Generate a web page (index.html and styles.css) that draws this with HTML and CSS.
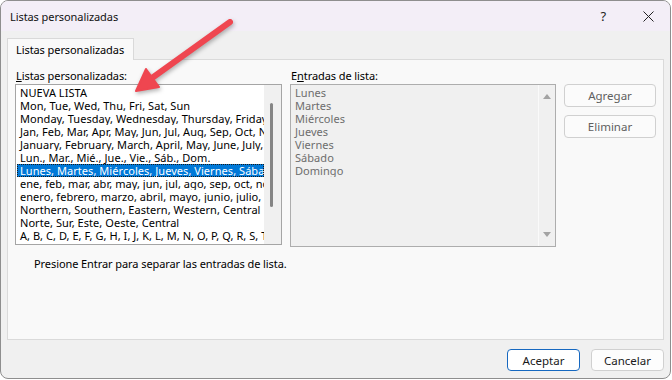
FILE: index.html
```html
<!DOCTYPE html>
<html lang="es">
<head>
    <meta charset="UTF-8">
    <title>Listas personalizadas</title>
    <link rel="stylesheet" href="styles.css">
</head>
<body>
    <div class="window">
        <div class="titlebar">
            <span class="title">Listas personalizadas</span>
            <div class="title-actions">
                <span class="help">?</span>
                <svg class="close" width="11" height="11" viewBox="0 0 11 11">
                    <path d="M0.5 0.5 L10.5 10.5 M10.5 0.5 L0.5 10.5" stroke="#222" stroke-width="1" fill="none"/>
                </svg>
            </div>
        </div>

        <div class="dialog-body">
            <div class="tabs">
                <div class="tab">Listas personalizadas</div>
            </div>

            <div class="panel">
                <div class="columns">
                    <div class="col col-lists">
                        <label class="field-label"><u>L</u>istas personalizadas:</label>
                        <div class="listbox">
                            <ul class="items">
                                <li>NUEVA LISTA</li>
                                <li>Mon, Tue, Wed, Thu, Fri, Sat, Sun</li>
                                <li>Monday, Tuesday, Wednesday, Thursday, Friday, Saturday, Sunday</li>
                                <li>Jan, Feb, Mar, Apr, May, Jun, Jul, Aug, Sep, Oct, Nov, Dec</li>
                                <li>January, February, March, April, May, June, July, August</li>
                                <li>Lun., Mar., Mié., Jue., Vie., Sáb., Dom.</li>
                                <li class="selected">Lunes, Martes, Miércoles, Jueves, Viernes, Sábado, Domingo</li>
                                <li>ene, feb, mar, abr, may, jun, jul, ago, sep, oct, nov, dic</li>
                                <li>enero, febrero, marzo, abril, mayo, junio, julio, agosto</li>
                                <li>Northern, Southern, Eastern, Western, Central</li>
                                <li>Norte, Sur, Este, Oeste, Central</li>
                                <li>A, B, C, D, E, F, G, H, I, J, K, L, M, N, O, P, Q, R, S, T</li>
                            </ul>
                            <div class="scrollbar">
                                <div class="thumb"></div>
                            </div>
                        </div>
                    </div>

                    <div class="col col-entries">
                        <label class="field-label">E<u>n</u>tradas de lista:</label>
                        <div class="listbox disabled">
                            <ul class="items">
                                <li>Lunes</li>
                                <li>Martes</li>
                                <li>Miércoles</li>
                                <li>Jueves</li>
                                <li>Viernes</li>
                                <li>Sábado</li>
                                <li>Domingo</li>
                            </ul>
                            <div class="scrollbar arrows">
                                <span class="arrow-up"></span>
                                <span class="arrow-down"></span>
                            </div>
                        </div>
                    </div>

                    <div class="side-buttons">
                        <button class="btn side">Agregar</button>
                        <button class="btn side">Eliminar</button>
                    </div>
                </div>

                <p class="hint">Presione Entrar para separar las entradas de lista.</p>
            </div>

            <div class="footer">
                <button class="btn primary">Aceptar</button>
                <button class="btn">Cancelar</button>
            </div>
        </div>

        <!-- flecha de anotación -->
        <svg class="annotation" width="671" height="379" viewBox="0 0 671 379">
            <line x1="230" y1="22" x2="152" y2="78" stroke="#ef4650" stroke-width="6" stroke-linecap="round"/>
            <polygon points="136,91 146,69 159,87" fill="#ef4650" stroke="#ef4650" stroke-width="2" stroke-linejoin="round"/>
        </svg>
    </div>
</body>
</html>
```

FILE: styles.css
```css
* {
    margin: 0;
    padding: 0;
    box-sizing: border-box;
}

body {
    background-color: #ffffff;
    font-family: "Noto Sans", "Open Sans", sans-serif;
    font-size: 11px;
    letter-spacing: -0.08px;
    color: #000;
}

.window {
    position: relative;
    width: 671px;
    height: 379px;
    border: 1px solid #8e8e8e;
    border-radius: 8px;
    overflow: hidden;
    background-color: #f0f0f0;
}

/* barra de título */
.titlebar {
    height: 30px;
    display: flex;
    align-items: center;
    justify-content: space-between;
    padding: 0 16px 0 9px;
    background-color: #f3eef7;
}

.title {
    font-size: 11px;
    color: #111;
}

.title-actions {
    display: flex;
    align-items: center;
    gap: 37px;
}

.help {
    font-size: 13px;
    color: #222;
}

.close {
    display: block;
}

.dialog-body {
    padding: 7px 6px 0 6px;
}

.tabs {
    display: flex;
    height: 21px;
}

.tab {
    position: relative;
    z-index: 1;
    width: 127px;
    height: 22px;
    padding-left: 8px;
    line-height: 21px;
    white-space: nowrap;
    background-color: #f9f9f9;
    border: 1px solid #d9d9d9;
    border-bottom: none;
}

.panel {
    height: 281px;
    padding: 8px 7px 0 7px;
    background-color: #f9f9f9;
    border: 1px solid #dadada;
}

.columns {
    display: flex;
    gap: 8px;
}

.col-lists {
    width: 267px;
}

.col-entries {
    width: 266px;
}

.field-label {
    display: block;
    height: 16px;
    line-height: 15px;
    padding-left: 1px;
    white-space: nowrap;
}

.listbox {
    display: flex;
    height: 161px;
    background-color: #fff;
    border: 1px solid #a5a5a5;
    overflow: hidden;
}

.listbox.disabled {
    height: 163px;
    background-color: #f0f0f0;
    border-color: #adadad;
    color: #6d6d6d;
}

.items {
    flex: 1;
    min-width: 0;
    list-style: none;
    padding: 1px 0 0 1px;
    overflow: hidden;
    letter-spacing: 0.05px;
}

.items li {
    height: 13px;
    line-height: 13px;
    padding-left: 3px;
    white-space: nowrap;
    overflow: hidden;
}

.items li.selected {
    background-color: #0078d7;
    color: #fff;
    outline: 1px dotted #1b1b1b;
    outline-offset: -1px;
}

.scrollbar {
    position: relative;
    width: 17px;
    flex-shrink: 0;
    background-color: #f0f0f0;
}

.thumb {
    position: absolute;
    left: 6px;
    top: 18px;
    width: 3px;
    height: 104px;
    border-radius: 2px;
    background-color: #858585;
}

.scrollbar.arrows {
    border-left: 1px solid #fafafa;
}

.arrow-up,
.arrow-down {
    position: absolute;
    left: 4px;
    width: 0;
    height: 0;
    border-left: 4px solid transparent;
    border-right: 4px solid transparent;
}

.arrow-up {
    top: 9px;
    border-bottom: 5px solid #a3a3a3;
}

.arrow-down {
    bottom: 9px;
    border-top: 5px solid #a3a3a3;
}

.side-buttons {
    display: flex;
    flex-direction: column;
    gap: 8px;
    padding-top: 16px;
}

.btn {
    font-family: inherit;
    font-size: 11.5px;
    width: 73px;
    height: 22px;
    background-color: #fdfdfd;
    border: 1px solid #d0d0d0;
    border-radius: 4px;
    color: #1a1a1a;
}

.btn.side {
    width: 92px;
    height: 23px;
    color: #5f5f5f;
    background-color: #fbfbfb;
}

.btn.primary {
    border-color: #1668c0;
    background-color: #fff;
}

.hint {
    margin: 10px 0 0 19px;
    line-height: 14px;
}

.footer {
    display: flex;
    justify-content: flex-end;
    gap: 11px;
    padding-top: 9px;
}

.annotation {
    position: absolute;
    top: -1px;
    left: -1px;
    pointer-events: none;
    filter: drop-shadow(1px 2px 2px rgba(0, 0, 0, 0.3));
}
```
